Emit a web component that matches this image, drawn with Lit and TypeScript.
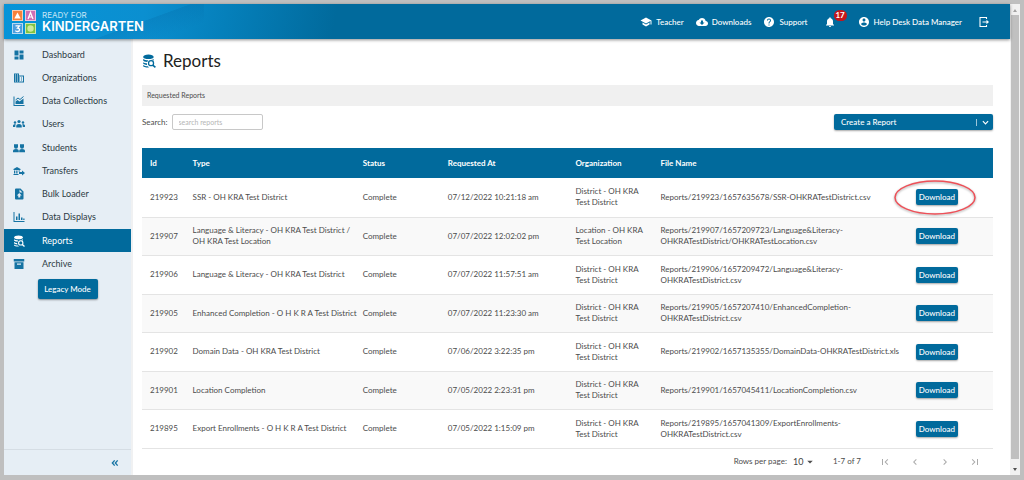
import { LitElement, html, svg, css } from "lit";
import { customElement, property, state } from "lit/decorators.js";
import { classMap } from "lit/directives/class-map.js";

const icons: Record<string, unknown> = {
  dashboard: svg`<path d="M3 13h8V3H3v10zm0 8h8v-6H3v6zm10 0h8V11h-8v10zm0-18v6h8V3h-8z"/>`,
  domain: svg`<path d="M12 7V3H2v18h20V7H12zM6 19H4v-2h2v2zm0-4H4v-2h2v2zm0-4H4V9h2v2zm0-4H4V5h2v2zm4 12H8v-2h2v2zm0-4H8v-2h2v2zm0-4H8V9h2v2zm0-4H8V5h2v2zm10 12h-8v-2h2v-2h-2v-2h2v-2h-2V9h8v10zm-2-8h-2v2h2v-2zm0 4h-2v2h2v-2z"/>`,
  collections: svg`<path d="M1 3h2v17h20v2H1z"/><path d="M5 18v-5l4-3 4 3 8-6v11z"/><path d="M5 10l5-4 4 3 7-6" fill="none" stroke="currentColor" stroke-width="2"/>`,
  users: svg`<circle cx="12" cy="7" r="3.2"/><circle cx="4" cy="9" r="2.4"/><circle cx="20" cy="9" r="2.4"/><path d="M6.500 19v-3c0-2.600 2.400-4 5.500-4s5.500 1.400 5.500 4v3z"/><path d="M0 18v-2.500c0-2 1.600-3 4-3 .7 0 1.200.1 1.700.3-.8 1-1.200 2-1.200 3.200v2zM24 18v-2.500c0-2-1.600-3-4-3-.7 0-1.200.1-1.700.3.8 1 1.200 2 1.200 3.200v2z"/>`,
  students: svg`<path d="M2 4.500h8v5a4 4 0 0 1-8 0zM14 4.500h8v5a4 4 0 0 1-8 0zM0 20.500V18c0-2.500 2-4 6-4s5.600 1.500 5.600 4v2.500zM12.400 20.500V18c0-2.500 2-4 5.600-4 4 0 6 1.500 6 4v2.500z"/>`,
  transfers: svg`<path d="M1 8l7-4 7 4v2H1zM2 11h2.500v6H2zM6.500 11H9v6H6.500zM1 18h10v2H1zM11 11h3v2h-3z"/><path d="M12 14h6v-3l6 5-6 5v-3h-6z"/>`,
  loader: svg`<path fill-rule="evenodd" d="M6 1h9l6 6v14a2 2 0 0 1-2 2H6a2 2 0 0 1-2-2V3a2 2 0 0 1 2-2zm7 2v6h6zm-2.500 16h4v-4h3l-5-5-5 5h3z"/>`,
  displays: svg`<path d="M1 2h2v18h20v2H1zM6 11h3v7H6zM11 5h3v13h-3zM16 13h3v5h-3zM20.500 15H23v3h-2.500z"/>`,
  reports: svg`<path d="M2 5c0-2.400 4-4 9-4s9 1.600 9 4-4 3.500-9 3.500S2 7.400 2 5z"/><path d="M2 8.500c2 1.600 5 2.300 8.500 2.300L9 13.500c-3.500-.2-7-1.300-7-3zM20 8.500V11l-5-.7c2-.3 3.700-.9 5-1.800zM2 14c1.500 1.200 3.800 1.800 6.300 2l.5 2.800C5 18.600 2 17.600 2 16zM2 19c1.800 1.400 4.500 2 8 2.200l2 1.800C7 23.200 2 22.300 2 20.500z"/><circle cx="15.500" cy="15.800" r="4.300" fill="none" stroke="currentColor" stroke-width="2.200"/><path d="M18.500 19l4.500 4" stroke="currentColor" stroke-width="2.600"/>`,
  archive: svg`<path fill-rule="evenodd" d="M1.500 2h21v5h-21zM3 8.500h18V22H3zm5 2.500v2.500h8V11z"/>`,
  school: svg`<path d="M5 13.180v4L12 21l7-3.820v-4L12 17l-7-3.820zM12 3L1 9l11 6 9-4.910V17h2V9L12 3z"/>`,
  cloud: svg`<path d="M19.350 10.040C18.670 6.590 15.640 4 12 4 9.110 4 6.600 5.640 5.350 8.040 2.340 8.360 0 10.910 0 14c0 3.310 2.690 6 6 6h13c2.760 0 5-2.240 5-5 0-2.640-2.050-4.780-4.650-4.960zM17 13l-5 5-5-5h3V9h4v4h3z"/>`,
  help: svg`<path d="M12 2C6.480 2 2 6.480 2 12s4.480 10 10 10 10-4.480 10-10S17.520 2 12 2zm1 17h-2v-2h2v2zm2.070-7.750l-.9.920C13.450 12.900 13 13.500 13 15h-2v-.5c0-1.100.450-2.100 1.170-2.830l1.240-1.260c.370-.360.590-.860.590-1.410 0-1.100-.9-2-2-2s-2 .9-2 2H8c0-2.210 1.790-4 4-4s4 1.790 4 4c0 .880-.360 1.680-.930 2.250z"/>`,
  bell: svg`<path d="M12 22c1.100 0 2-.9 2-2h-4c0 1.100.890 2 2 2zm6-6v-5c0-3.070-1.640-5.640-4.500-6.320V4c0-.830-.670-1.500-1.500-1.500s-1.500.670-1.500 1.500v.680C7.630 5.360 6 7.920 6 11v5l-2 2v1h16v-1l-2-2z"/>`,
  person: svg`<path d="M12 2C6.480 2 2 6.480 2 12s4.480 10 10 10 10-4.480 10-10S17.520 2 12 2zm0 3c1.660 0 3 1.340 3 3s-1.340 3-3 3-3-1.340-3-3 1.340-3 3-3zm0 14.200c-2.500 0-4.710-1.280-6-3.220.030-1.990 4-3.080 6-3.080 1.990 0 5.970 1.090 6 3.080-1.290 1.940-3.500 3.220-6 3.220z"/>`,
  logout: svg`<path d="M17 6V3H4v18h13v-3" fill="none" stroke="currentColor" stroke-width="2.200"/><path d="M9 10.900h8V7.500l5 4.500-5 4.500v-3.400H9z"/>`,
  chevronDown: svg`<path d="M3 7.500l9 9 9-9" fill="none" stroke="currentColor" stroke-width="4"/>`,
  collapse: svg`<path d="M11 4l-7 8 7 8M20 4l-7 8 7 8" fill="none" stroke="currentColor" stroke-width="4"/>`,
  first: svg`<path d="M18.410 16.590L13.820 12l4.590-4.590L17 6l-6 6 6 6zM6 6h2v12H6z"/>`,
  prev: svg`<path d="M15.410 7.410L14 6l-6 6 6 6 1.410-1.410L10.830 12z"/>`,
  next: svg`<path d="M10 6L8.590 7.410 13.170 12l-4.580 4.590L10 18l6-6z"/>`,
  last: svg`<path d="M5.590 7.410L10.180 12l-4.590 4.590L7 18l6-6-6-6zM16 6h2v12h-2z"/>`,
  caret: svg`<path d="M1 7h22L12 18z"/>`,
};

@customElement("app-icon")
class AppIcon extends LitElement {
  @property() name = "";
  static styles = css`
    :host { display: inline-flex; width: 12px; height: 12px; flex: none; }
    svg { width: 100%; height: 100%; fill: currentColor; display: block; }
  `;
  render() {
    return html`<svg viewBox="0 0 24 24" aria-hidden="true">${icons[this.name]}</svg>`;
  }
}

@customElement("app-header")
class AppHeader extends LitElement {
  static styles = css`
    :host {
      display: flex; align-items: center; justify-content: space-between;
      height: 35px; box-sizing: border-box; padding: 0 20px 0 8px; color: #fff;
      background:
        linear-gradient(160deg, transparent 49%, rgba(0, 90, 150, 0.18) 50%, transparent 80%) 80px 0 / 120px 35px no-repeat,
        linear-gradient(100deg, #0794d8 0%, #0b8fd0 14%, #0580bb 22%, #016a9c 33%, #016a9c 100%);
      box-shadow: 0 1px 3px rgba(0, 0, 0, 0.45); position: relative; z-index: 1;
    }
    nav { display: flex; align-items: center; gap: 12px; }
    a, button { display: flex; align-items: center; gap: 4px; color: #fff; text-decoration: none; font: 500 8px/12px Lato, sans-serif; }
    .brand { gap: 6px; font-family: Inter, sans-serif; }
    .blocks { width: 24px; height: 24px; }
    .name { display: flex; flex-direction: column; }
    .small { font-size: 8px; line-height: 9px; font-weight: 400; color: #c7e6f6; }
    .big { font-size: 13px; line-height: 13px; font-weight: 600; }
    button { background: none; border: 0; padding: 0; position: relative; }
    .bell { margin: 0 10px 0 4px; }
    .badge {
      position: absolute; left: 10px; top: -6px; min-width: 13px; height: 11px; border-radius: 6px;
      background: #c4161c; line-height: 11px; font-weight: 700; text-align: center;
    }
    .out { margin-left: 4px; }
  `;
  render() {
    return html`
      <a class="brand" href="#home" aria-label="Ready for Kindergarten">
        <svg class="blocks" viewBox="0 0 24 24" aria-hidden="true">
          <rect width="11" height="11" fill="#f6813c"/><rect x="13" width="11" height="11" fill="#cf6fb4"/>
          <rect y="13" width="11" height="11" fill="#4d9ede"/><rect x="13" y="13" width="11" height="11" fill="#80c342"/>
          <g fill="none" stroke="#fff" opacity=".6"><rect x=".5" y=".5" width="10" height="10"/><rect x="13.500" y=".5" width="10" height="10"/><rect x=".5" y="13.500" width="10" height="10"/><rect x="13.500" y="13.500" width="10" height="10"/></g>
          <path d="M5.500 2.500l3.200 6H2.300z" fill="#fff"/>
          <path d="M16 9l2.500-6.500L21 9M17 7h3" fill="none" stroke="#fff" stroke-width="1.200"/>
          <path d="M3.500 15.800h4L5.500 18.200c3 0 2.500 3.500-.2 3.300-1 0-1.600-.4-2-.9" fill="none" stroke="#fff" stroke-width="1.300"/>
          <circle cx="18.500" cy="18.500" r="3.200" fill="#cdea9f"/>
        </svg>
        <span class="name"><span class="small">READY FOR</span><span class="big">KINDERGARTEN</span></span>
      </a>
      <nav>
        <a href="#teacher"><app-icon name="school"></app-icon>Teacher</a>
        <a href="#downloads"><app-icon name="cloud"></app-icon>Downloads</a>
        <a href="#support"><app-icon name="help"></app-icon>Support</a>
        <button class="bell" aria-label="Notifications"><app-icon name="bell"></app-icon><span class="badge">17</span></button>
        <a href="#profile"><app-icon name="person"></app-icon>Help Desk Data Manager</a>
        <button class="out" aria-label="Sign out"><app-icon name="logout"></app-icon></button>
      </nav>
    `;
  }
}

@customElement("app-sidebar")
class AppSidebar extends LitElement {
  @property() current = "Reports";
  private items = [
    ["dashboard", "Dashboard"], ["domain", "Organizations"], ["collections", "Data Collections"],
    ["users", "Users"], ["students", "Students"], ["transfers", "Transfers"], ["loader", "Bulk Loader"],
    ["displays", "Data Displays"], ["reports", "Reports"], ["archive", "Archive"],
  ];
  static styles = css`
    :host { display: flex; flex-direction: column; background: #e6eef5; border-right: 2px solid #f0f1f2; }
    ul { list-style: none; margin: 0; padding: 4px 0 0; }
    a {
      display: flex; align-items: center; gap: 17px; height: 23px; padding-left: 9px;
      font: 400 9px/12px Lato, sans-serif; color: #2c3a44; text-decoration: none;
    }
    li:nth-child(4n) a { height: 24px; }
    app-icon { color: #1573a3; }
    .on, .on app-icon { color: #fff; }
    .on { background: #016a9c; }
    .legacy {
      align-self: center; margin-top: 4px; width: 60px; height: 20px; padding: 0; border: 0; border-radius: 2px;
      background: #016a9c; color: #fff; font: 500 8px/12px Lato, sans-serif; box-shadow: 0 1px 2px rgba(0, 0, 0, 0.4);
    }
    .foot { margin-top: auto; height: 25px; border-top: 1px solid #d5dde4; display: flex; align-items: center; justify-content: flex-end; padding-right: 12px; }
    .fold { display: flex; background: none; border: 0; padding: 0; }
    .fold app-icon { width: 8px; height: 8px; }
  `;
  render() {
    return html`
      <nav><ul>
        ${this.items.map(([icon, label]) => html`
          <li><a href="#${icon}" class=${classMap({ on: label === this.current })}><app-icon name=${icon}></app-icon>${label}</a></li>`)}
      </ul></nav>
      <button class="legacy">Legacy Mode</button>
      <div class="foot"><button class="fold" aria-label="Collapse menu"><app-icon name="collapse"></app-icon></button></div>
    `;
  }
}

interface Report { id: number; type: string; at: string; org: string; file: string; marked?: boolean }

const reports: Report[] = [
  { id: 219923, type: "SSR - OH KRA Test District", at: "07/12/2022 10:21:18 am", org: "District - OH KRA Test District", file: "Reports/219923/1657635678/SSR-OHKRATestDistrict.csv", marked: true },
  { id: 219907, type: "Language & Literacy - OH KRA Test District /\nOH KRA Test Location", at: "07/07/2022 12:02:02 pm", org: "Location - OH KRA Test Location", file: "Reports/219907/1657209723/Language&Literacy-OHKRATestDistrict/OHKRATestLocation.csv" },
  { id: 219906, type: "Language & Literacy - OH KRA Test District", at: "07/07/2022 11:57:51 am", org: "District - OH KRA Test District", file: "Reports/219906/1657209472/Language&Literacy-OHKRATestDistrict.csv" },
  { id: 219905, type: "Enhanced Completion - O H K R A Test District", at: "07/07/2022 11:23:30 am", org: "District - OH KRA Test District", file: "Reports/219905/1657207410/EnhancedCompletion-OHKRATestDistrict.csv" },
  { id: 219902, type: "Domain Data - OH KRA Test District", at: "07/06/2022 3:22:35 pm", org: "District - OH KRA Test District", file: "Reports/219902/1657135355/DomainData-OHKRATestDistrict.xls" },
  { id: 219901, type: "Location Completion", at: "07/05/2022 2:23:31 pm", org: "District - OH KRA Test District", file: "Reports/219901/1657045411/LocationCompletion.csv" },
  { id: 219895, type: "Export Enrollments - O H K R A Test District", at: "07/05/2022 1:15:09 pm", org: "District - OH KRA Test District", file: "Reports/219895/1657041309/ExportEnrollments-OHKRATestDistrict.csv" },
];

@customElement("reports-page")
class ReportsPage extends LitElement {
  @state() private query = "";
  static styles = css`
    :host { display: block; padding: 11px 17px 0 9px; background: #fff; font: 8px/11px Lato, sans-serif; color: #4c4c4c; }
    h1 { display: flex; align-items: center; gap: 7px; margin: 0; font: 400 17px/22px Lato, sans-serif; color: #222; }
    h1 app-icon { width: 14px; height: 14px; color: #016a9c; }
    .crumb { margin-top: 13px; height: 21px; padding: 0 5px; background: #f0f0f0; display: flex; align-items: center; font-size: 7px; }
    .tools { display: flex; align-items: center; justify-content: space-between; margin-top: 8px; }
    label { display: flex; align-items: center; gap: 4px; }
    input { width: 91px; height: 16px; box-sizing: border-box; border: 1px solid #c8c8c8; border-radius: 2px; padding: 0 6px; font: 7px/12px Lato, sans-serif; color: #444; }
    input::placeholder { color: #b5b5b5; }
    .create, .get {
      border: 0; border-radius: 2px; background: #016a9c; color: #fff; font: 500 8px/12px Lato, sans-serif;
      box-shadow: 0 1px 2px rgba(0, 0, 0, 0.35);
    }
    .create { width: 159px; height: 16px; padding: 0 4px 0 7px; display: flex; align-items: center; justify-content: space-between; }
    .create app-icon { width: 7px; height: 7px; padding-left: 5px; border-left: 1px solid #9cc6da; }
    table { width: 100%; margin-top: 18px; border-collapse: collapse; table-layout: fixed; }
    th, td { box-sizing: border-box; text-align: left; padding: 0 0 0 8px; overflow-wrap: break-word; }
    th { height: 30px; background: #016a9c; color: #fff; font-weight: 700; }
    td { height: 38px; border-bottom: 1px solid #e4e4e4; }
    tbody tr:nth-child(odd) td { height: 39px; }
    tbody tr:nth-child(even) { background: #f9f9f9; }
    .type { white-space: pre; }
    .org { padding-right: 8px; }
    .w5 { width: 5%; } .w10 { width: 10%; } .w15 { width: 15%; } .w20 { width: 20%; } .w30 { width: 30%; }
    .cell { position: relative; display: flex; }
    .get { height: 16px; padding: 0; width: 42px; }
    .ring { position: absolute; left: -22px; top: -9px; width: 82px; height: 35px; overflow: visible; pointer-events: none; filter: drop-shadow(0 1px 1px rgba(0, 0, 0, 0.35)); }
    .ring ellipse { fill: none; stroke: #ee5058; stroke-width: 1.500; }
    .pager { display: flex; align-items: center; justify-content: flex-end; height: 26px; padding-right: 12px; }
    .pager label { gap: 6px; position: relative; }
    select { appearance: none; border: 0; background: none; padding: 0; width: 20px; font: 9px/12px Lato, sans-serif; color: #444; }
    .pager label app-icon { position: absolute; right: 0; width: 6px; height: 6px; pointer-events: none; }
    .range { margin: 0 18px 0 20px; }
    .steps { display: flex; gap: 18px; }
    .steps button { display: flex; padding: 0; border: 0; background: none; color: #aaa; }
  `;
  render() {
    const q = this.query.toLowerCase();
    const rows = reports.filter((r) => (r.type + r.file).toLowerCase().includes(q));
    return html`
      <h1><app-icon name="reports"></app-icon>Reports</h1>
      <div class="crumb">Requested Reports</div>
      <div class="tools">
        <label>Search: <input placeholder="search reports" .value=${this.query} @input=${(e: Event) => (this.query = (e.target as HTMLInputElement).value)} /></label>
        <button class="create">Create a Report<app-icon name="chevronDown"></app-icon></button>
      </div>
      <table>
        <thead><tr>
          <th class="w5">Id</th><th class="w20">Type</th><th class="w10">Status</th><th class="w15">Requested At</th>
          <th class="w10">Organization</th><th class="w30">File Name</th><th class="w10"></th>
        </tr></thead>
        <tbody>
          ${rows.map((r) => html`<tr>
            <td>${r.id}</td><td class="type">${r.type}</td><td>Complete</td><td>${r.at}</td><td class="org">${r.org}</td><td>${r.file}</td>
            <td><div class="cell"><button class="get">Download</button>
              ${r.marked ? html`<svg class="ring" viewBox="0 0 82 35" aria-hidden="true"><ellipse cx="41" cy="17.500" rx="40" ry="16.500"/></svg>` : ""}
            </div></td>
          </tr>`)}
        </tbody>
      </table>
      <div class="pager">
        <label>Rows per page: <select><option>10</option><option>25</option><option>50</option></select><app-icon name="caret"></app-icon></label>
        <span class="range">1-7 of 7</span>
        <div class="steps">
          ${["first", "prev", "next", "last"].map((n) => html`<button disabled aria-label="${n} page"><app-icon name=${n}></app-icon></button>`)}
        </div>
      </div>
    `;
  }
}

@customElement("app-root")
class AppRoot extends LitElement {
  static styles = css`
    :host {
      display: grid; grid-template-columns: minmax(0, 1fr) 10px; min-height: 100vh; box-sizing: border-box;
      padding: 4px 4px 5px; background: #bfbfbf; font-family: Lato, sans-serif;
    }
    .page { display: grid; grid-template: auto minmax(0, 1fr) / 129px minmax(0, 1fr); background: #fff; }
    app-header { grid-column: 1 / -1; }
    .bar { display: flex; flex-direction: column; align-items: center; background: #f1f1f1; padding: 0 1px; }
    .thumb { flex: 1; align-self: stretch; background: #c0c0c0; }
    .end { width: 10px; height: 11px; }
    .end.down { height: 16px; }
    .end path { fill: #a3a3a3; }
    .end.down path { fill: #505050; }
  `;
  render() {
    return html`
      <div class="page">
        <app-header></app-header>
        <app-sidebar></app-sidebar>
        <reports-page></reports-page>
      </div>
      <div class="bar" aria-hidden="true">
        <svg class="end" viewBox="0 0 10 11"><path d="M3 8l2-3 2 3z"/></svg>
        <div class="thumb"></div>
        <svg class="end down" viewBox="0 0 10 16"><path d="M3 9h4l-2 3z"/></svg>
      </div>
    `;
  }
}
